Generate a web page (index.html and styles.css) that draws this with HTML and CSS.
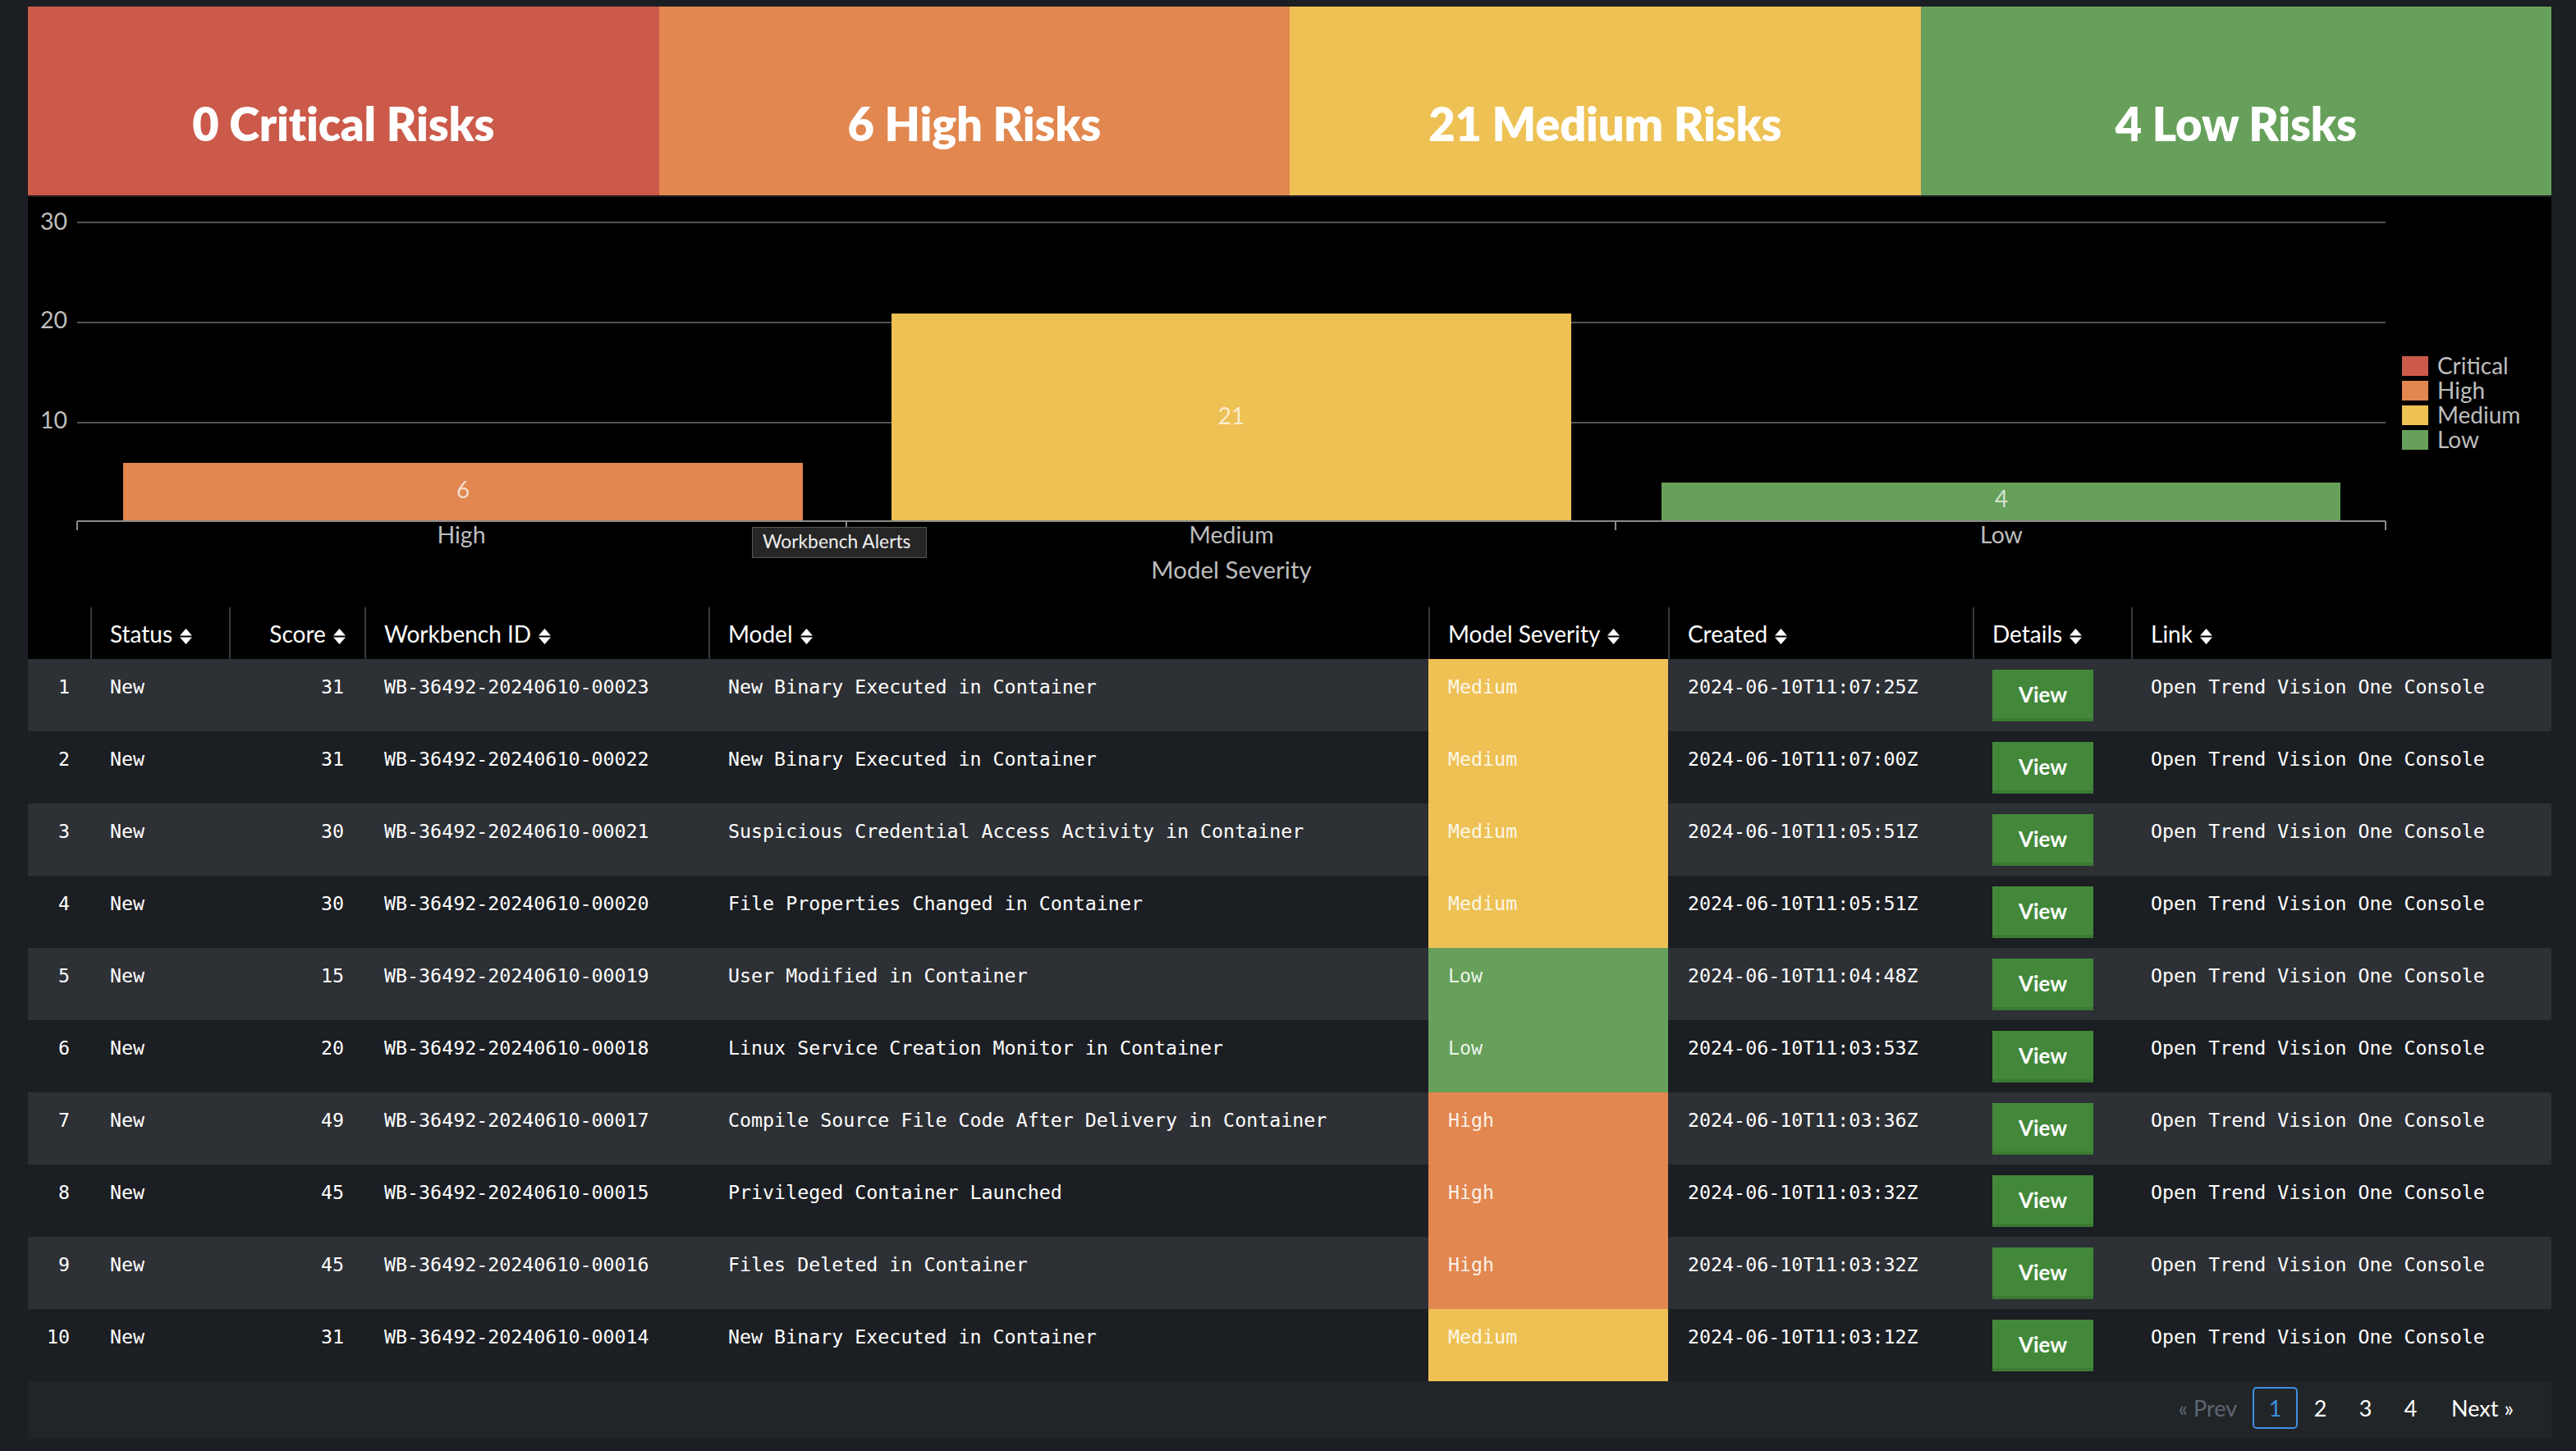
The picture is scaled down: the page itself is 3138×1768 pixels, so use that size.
FILE: index.html
```html
<!DOCTYPE html>
<html lang="en">
<head>
<meta charset="utf-8">
<title>Workbench Alerts</title>
<link rel="stylesheet" href="styles.css">
</head>
<body>
<div class="page">
  <div class="kpis">
    <div class="kpi kpi-critical">0 Critical Risks</div>
    <div class="kpi kpi-high">6 High Risks</div>
    <div class="kpi kpi-medium">21 Medium Risks</div>
    <div class="kpi kpi-low">4 Low Risks</div>
  </div>

  <div class="chart-panel">
    <svg class="chart" width="3074" height="480" viewBox="0 0 3074 480">
      <g class="grid">
        <line x1="60" x2="2872" y1="31" y2="31"/>
        <line x1="60" x2="2872" y1="153" y2="153"/>
        <line x1="60" x2="2872" y1="275" y2="275"/>
      </g>
      <g class="ylabels">
        <text x="48" y="40">30</text>
        <text x="48" y="160">20</text>
        <text x="48" y="282">10</text>
      </g>
      <rect class="bar-high" x="116" y="324" width="828" height="70"/>
      <rect class="bar-medium" x="1052" y="142" width="828" height="252"/>
      <rect class="bar-low" x="1990" y="348" width="827" height="46"/>
      <g class="barlabels">
        <text x="530" y="367">6</text>
        <text x="1466" y="277">21</text>
        <text x="2404" y="378">4</text>
      </g>
      <g class="axis">
        <line x1="60" x2="2872" y1="395" y2="395"/>
        <line x1="60" x2="60" y1="395" y2="406"/>
        <line x1="997" x2="997" y1="395" y2="406"/>
        <line x1="1934" x2="1934" y1="395" y2="406"/>
        <line x1="2872" x2="2872" y1="395" y2="406"/>
      </g>
      <g class="xlabels">
        <text x="528" y="422">High</text>
        <text x="1466" y="422">Medium</text>
        <text x="2404" y="422">Low</text>
        <text class="axis-title" x="1466" y="465">Model Severity</text>
      </g>
      <g class="legend">
        <rect class="sw-critical" x="2892" y="194" width="32" height="24"/>
        <rect class="sw-high" x="2892" y="224" width="32" height="24"/>
        <rect class="sw-medium" x="2892" y="254" width="32" height="24"/>
        <rect class="sw-low" x="2892" y="284" width="32" height="24"/>
        <text x="2935" y="216">Critical</text>
        <text x="2935" y="246">High</text>
        <text x="2935" y="276">Medium</text>
        <text x="2935" y="306">Low</text>
      </g>
      <g class="tooltip">
        <rect x="882.5" y="402.5" width="212" height="37"/>
        <text x="895" y="428">Workbench Alerts</text>
      </g>
    </svg>
  </div>

  <div class="table-panel">
    <table class="alerts">
      <colgroup>
        <col class="c-num"><col class="c-status"><col class="c-score"><col class="c-id"><col class="c-model"><col class="c-sev"><col class="c-created"><col class="c-details"><col class="c-link">
      </colgroup>
      <thead>
        <tr>
          <th></th>
          <th>Status <svg class="sort" width="15" height="19" viewBox="0 0 15 19"><path d="M0 8.5 L7.5 0 L15 8.5 Z M0 10.5 L15 10.5 L7.5 19 Z"/></svg></th>
          <th class="right">Score <svg class="sort" width="15" height="19" viewBox="0 0 15 19"><path d="M0 8.5 L7.5 0 L15 8.5 Z M0 10.5 L15 10.5 L7.5 19 Z"/></svg></th>
          <th>Workbench ID <svg class="sort" width="15" height="19" viewBox="0 0 15 19"><path d="M0 8.5 L7.5 0 L15 8.5 Z M0 10.5 L15 10.5 L7.5 19 Z"/></svg></th>
          <th>Model <svg class="sort" width="15" height="19" viewBox="0 0 15 19"><path d="M0 8.5 L7.5 0 L15 8.5 Z M0 10.5 L15 10.5 L7.5 19 Z"/></svg></th>
          <th>Model Severity <svg class="sort" width="15" height="19" viewBox="0 0 15 19"><path d="M0 8.5 L7.5 0 L15 8.5 Z M0 10.5 L15 10.5 L7.5 19 Z"/></svg></th>
          <th>Created <svg class="sort" width="15" height="19" viewBox="0 0 15 19"><path d="M0 8.5 L7.5 0 L15 8.5 Z M0 10.5 L15 10.5 L7.5 19 Z"/></svg></th>
          <th>Details <svg class="sort" width="15" height="19" viewBox="0 0 15 19"><path d="M0 8.5 L7.5 0 L15 8.5 Z M0 10.5 L15 10.5 L7.5 19 Z"/></svg></th>
          <th>Link <svg class="sort" width="15" height="19" viewBox="0 0 15 19"><path d="M0 8.5 L7.5 0 L15 8.5 Z M0 10.5 L15 10.5 L7.5 19 Z"/></svg></th>
        </tr>
      </thead>
      <tbody>
        <tr><td class="num">1</td><td>New</td><td class="right">31</td><td>WB-36492-20240610-00023</td><td>New Binary Executed in Container</td><td class="sev sev-medium">Medium</td><td>2024-06-10T11:07:25Z</td><td class="details"><span class="view">View</span></td><td>Open Trend Vision One Console</td></tr>
        <tr><td class="num">2</td><td>New</td><td class="right">31</td><td>WB-36492-20240610-00022</td><td>New Binary Executed in Container</td><td class="sev sev-medium">Medium</td><td>2024-06-10T11:07:00Z</td><td class="details"><span class="view">View</span></td><td>Open Trend Vision One Console</td></tr>
        <tr><td class="num">3</td><td>New</td><td class="right">30</td><td>WB-36492-20240610-00021</td><td>Suspicious Credential Access Activity in Container</td><td class="sev sev-medium">Medium</td><td>2024-06-10T11:05:51Z</td><td class="details"><span class="view">View</span></td><td>Open Trend Vision One Console</td></tr>
        <tr><td class="num">4</td><td>New</td><td class="right">30</td><td>WB-36492-20240610-00020</td><td>File Properties Changed in Container</td><td class="sev sev-medium">Medium</td><td>2024-06-10T11:05:51Z</td><td class="details"><span class="view">View</span></td><td>Open Trend Vision One Console</td></tr>
        <tr><td class="num">5</td><td>New</td><td class="right">15</td><td>WB-36492-20240610-00019</td><td>User Modified in Container</td><td class="sev sev-low">Low</td><td>2024-06-10T11:04:48Z</td><td class="details"><span class="view">View</span></td><td>Open Trend Vision One Console</td></tr>
        <tr><td class="num">6</td><td>New</td><td class="right">20</td><td>WB-36492-20240610-00018</td><td>Linux Service Creation Monitor in Container</td><td class="sev sev-low">Low</td><td>2024-06-10T11:03:53Z</td><td class="details"><span class="view">View</span></td><td>Open Trend Vision One Console</td></tr>
        <tr><td class="num">7</td><td>New</td><td class="right">49</td><td>WB-36492-20240610-00017</td><td>Compile Source File Code After Delivery in Container</td><td class="sev sev-high">High</td><td>2024-06-10T11:03:36Z</td><td class="details"><span class="view">View</span></td><td>Open Trend Vision One Console</td></tr>
        <tr><td class="num">8</td><td>New</td><td class="right">45</td><td>WB-36492-20240610-00015</td><td>Privileged Container Launched</td><td class="sev sev-high">High</td><td>2024-06-10T11:03:32Z</td><td class="details"><span class="view">View</span></td><td>Open Trend Vision One Console</td></tr>
        <tr><td class="num">9</td><td>New</td><td class="right">45</td><td>WB-36492-20240610-00016</td><td>Files Deleted in Container</td><td class="sev sev-high">High</td><td>2024-06-10T11:03:32Z</td><td class="details"><span class="view">View</span></td><td>Open Trend Vision One Console</td></tr>
        <tr><td class="num">10</td><td>New</td><td class="right">31</td><td>WB-36492-20240610-00014</td><td>New Binary Executed in Container</td><td class="sev sev-medium">Medium</td><td>2024-06-10T11:03:12Z</td><td class="details"><span class="view">View</span></td><td>Open Trend Vision One Console</td></tr>
      </tbody>
    </table>
    <div class="pager">
      <span class="pg prev">« Prev</span>
      <span class="pg num active">1</span>
      <span class="pg num">2</span>
      <span class="pg num">3</span>
      <span class="pg num">4</span>
      <span class="pg next">Next »</span>
    </div>
  </div>
</div>
</body>
</html>
```

FILE: styles.css
```css
html, body {
  margin: 0;
  padding: 0;
  background: #1b1e22;
}

body {
  font-family: Lato, "Open Sans", sans-serif;
  color: #fff;
}

.page {
  padding: 8px 30px 0 34px;
}

/* KPI strip */
.kpis {
  display: grid;
  grid-template-columns: repeat(4, 1fr);
  height: 230px;
}

.kpi {
  display: flex;
  align-items: center;
  justify-content: center;
  padding-top: 54px;
  box-sizing: border-box;
  font-size: 56px;
  font-weight: 800;
  letter-spacing: -0.2px;
  color: #fff;
}

.kpi-critical { background: #cb5a4a; }
.kpi-high { background: #e1874f; }
.kpi-medium { background: #eec154; }
.kpi-low { background: #67a05b; }

/* chart */
.chart-panel {
  margin-top: 2px;
  background: #000;
  height: 480px;
}

.chart {
  display: block;
  font-family: Lato, sans-serif;
}

.chart .grid line {
  stroke: #545454;
  stroke-width: 2;
}

.chart .axis line {
  stroke: #8a8a8a;
  stroke-width: 2;
}

.chart .ylabels text {
  font-size: 28.5px;
  fill: #bdbdbd;
  text-anchor: end;
}

.chart .xlabels text {
  font-size: 28.5px;
  fill: #bdbdbd;
  text-anchor: middle;
}

.chart .xlabels .axis-title {
  font-size: 29.5px;
}

.chart .barlabels text {
  font-size: 28px;
  fill: rgba(255, 255, 255, 0.72);
  text-anchor: middle;
}

.bar-high, .sw-high { fill: #e1874f; }
.bar-medium, .sw-medium { fill: #eec154; }
.bar-low, .sw-low { fill: #67a05b; }
.sw-critical { fill: #cb5a4a; }

.chart .legend text {
  font-size: 28px;
  fill: #bdbdbd;
}

.chart .tooltip rect {
  fill: #262626;
  stroke: #555;
  stroke-width: 1;
}

.chart .tooltip text {
  font-size: 22.8px;
  fill: #eee;
}

/* table */
.table-panel {
  background: #000;
  padding-top: 20px;
}

.alerts {
  width: 100%;
  table-layout: fixed;
  border-collapse: separate;
  border-spacing: 0;
}

.c-num { width: 76px; }
.c-status { width: 169px; }
.c-score { width: 165px; }
.c-id { width: 419px; }
.c-model { width: 877px; }
.c-sev { width: 292px; }
.c-created { width: 371px; }
.c-details { width: 193px; }
.c-link { width: 512px; }

.alerts th {
  height: 63px;
  padding: 0 22px;
  text-align: left;
  vertical-align: middle;
  font-family: Lato, sans-serif;
  font-weight: 400;
  font-size: 28px;
  color: #fff;
  white-space: nowrap;
  background: #000;
}

.alerts th + th {
  border-left: 2px solid #343a41;
}

.alerts th.right {
  text-align: right;
  padding-right: 23px;
}

.sort {
  display: inline-block;
  vertical-align: -2px;
  margin-left: 2px;
  fill: #fff;
}

.alerts td {
  height: 88px;
  box-sizing: border-box;
  padding: 20px 24px 0;
  vertical-align: top;
  font-family: "DejaVu Sans Mono", "Liberation Mono", monospace;
  font-size: 23.3px;
  line-height: 28px;
  color: #fff;
  white-space: nowrap;
  overflow: hidden;
}

.alerts tbody tr:nth-child(odd) td { background: #2d3035; }
.alerts tbody tr:nth-child(even) td { background: #1b1e22; }

.alerts td.num {
  text-align: right;
  padding-right: 25px;
  padding-left: 0;
}

.alerts td.right {
  text-align: right;
  padding-right: 25px;
}

.alerts tbody tr td.sev { color: rgba(255, 255, 255, 0.9); }
.alerts tbody tr td.sev-medium { background: #eec154; }
.alerts tbody tr td.sev-low { background: #67a05b; }
.alerts tbody tr td.sev-high { background: #e1874f; }

.alerts td.details {
  padding-top: 13px;
}

.view {
  display: block;
  width: 123px;
  height: 63px;
  box-sizing: border-box;
  background: #43883a;
  border-bottom: 4px solid #3b7a33;
  color: #fff;
  font-family: Lato, sans-serif;
  font-weight: 700;
  font-size: 26px;
  line-height: 61px;
  text-align: center;
}

/* pagination */
.pager {
  height: 70px;
  box-sizing: border-box;
  padding: 7px 24px 0 0;
  background: #222528;
  display: flex;
  justify-content: flex-end;
  align-items: flex-start;
  font-family: Lato, sans-serif;
  font-size: 27px;
}

.pg {
  display: flex;
  align-items: center;
  justify-content: center;
  height: 51px;
  box-sizing: border-box;
  color: #fff;
}

.pg.prev {
  color: #5d6670;
  padding: 0 19px;
}

.pg.next {
  padding: 0 22px;
}

.pg.num {
  width: 55px;
}

.pg.active {
  border: 2px solid #3d8fe0;
  border-radius: 5px;
  color: #3d8fe0;
}
```
